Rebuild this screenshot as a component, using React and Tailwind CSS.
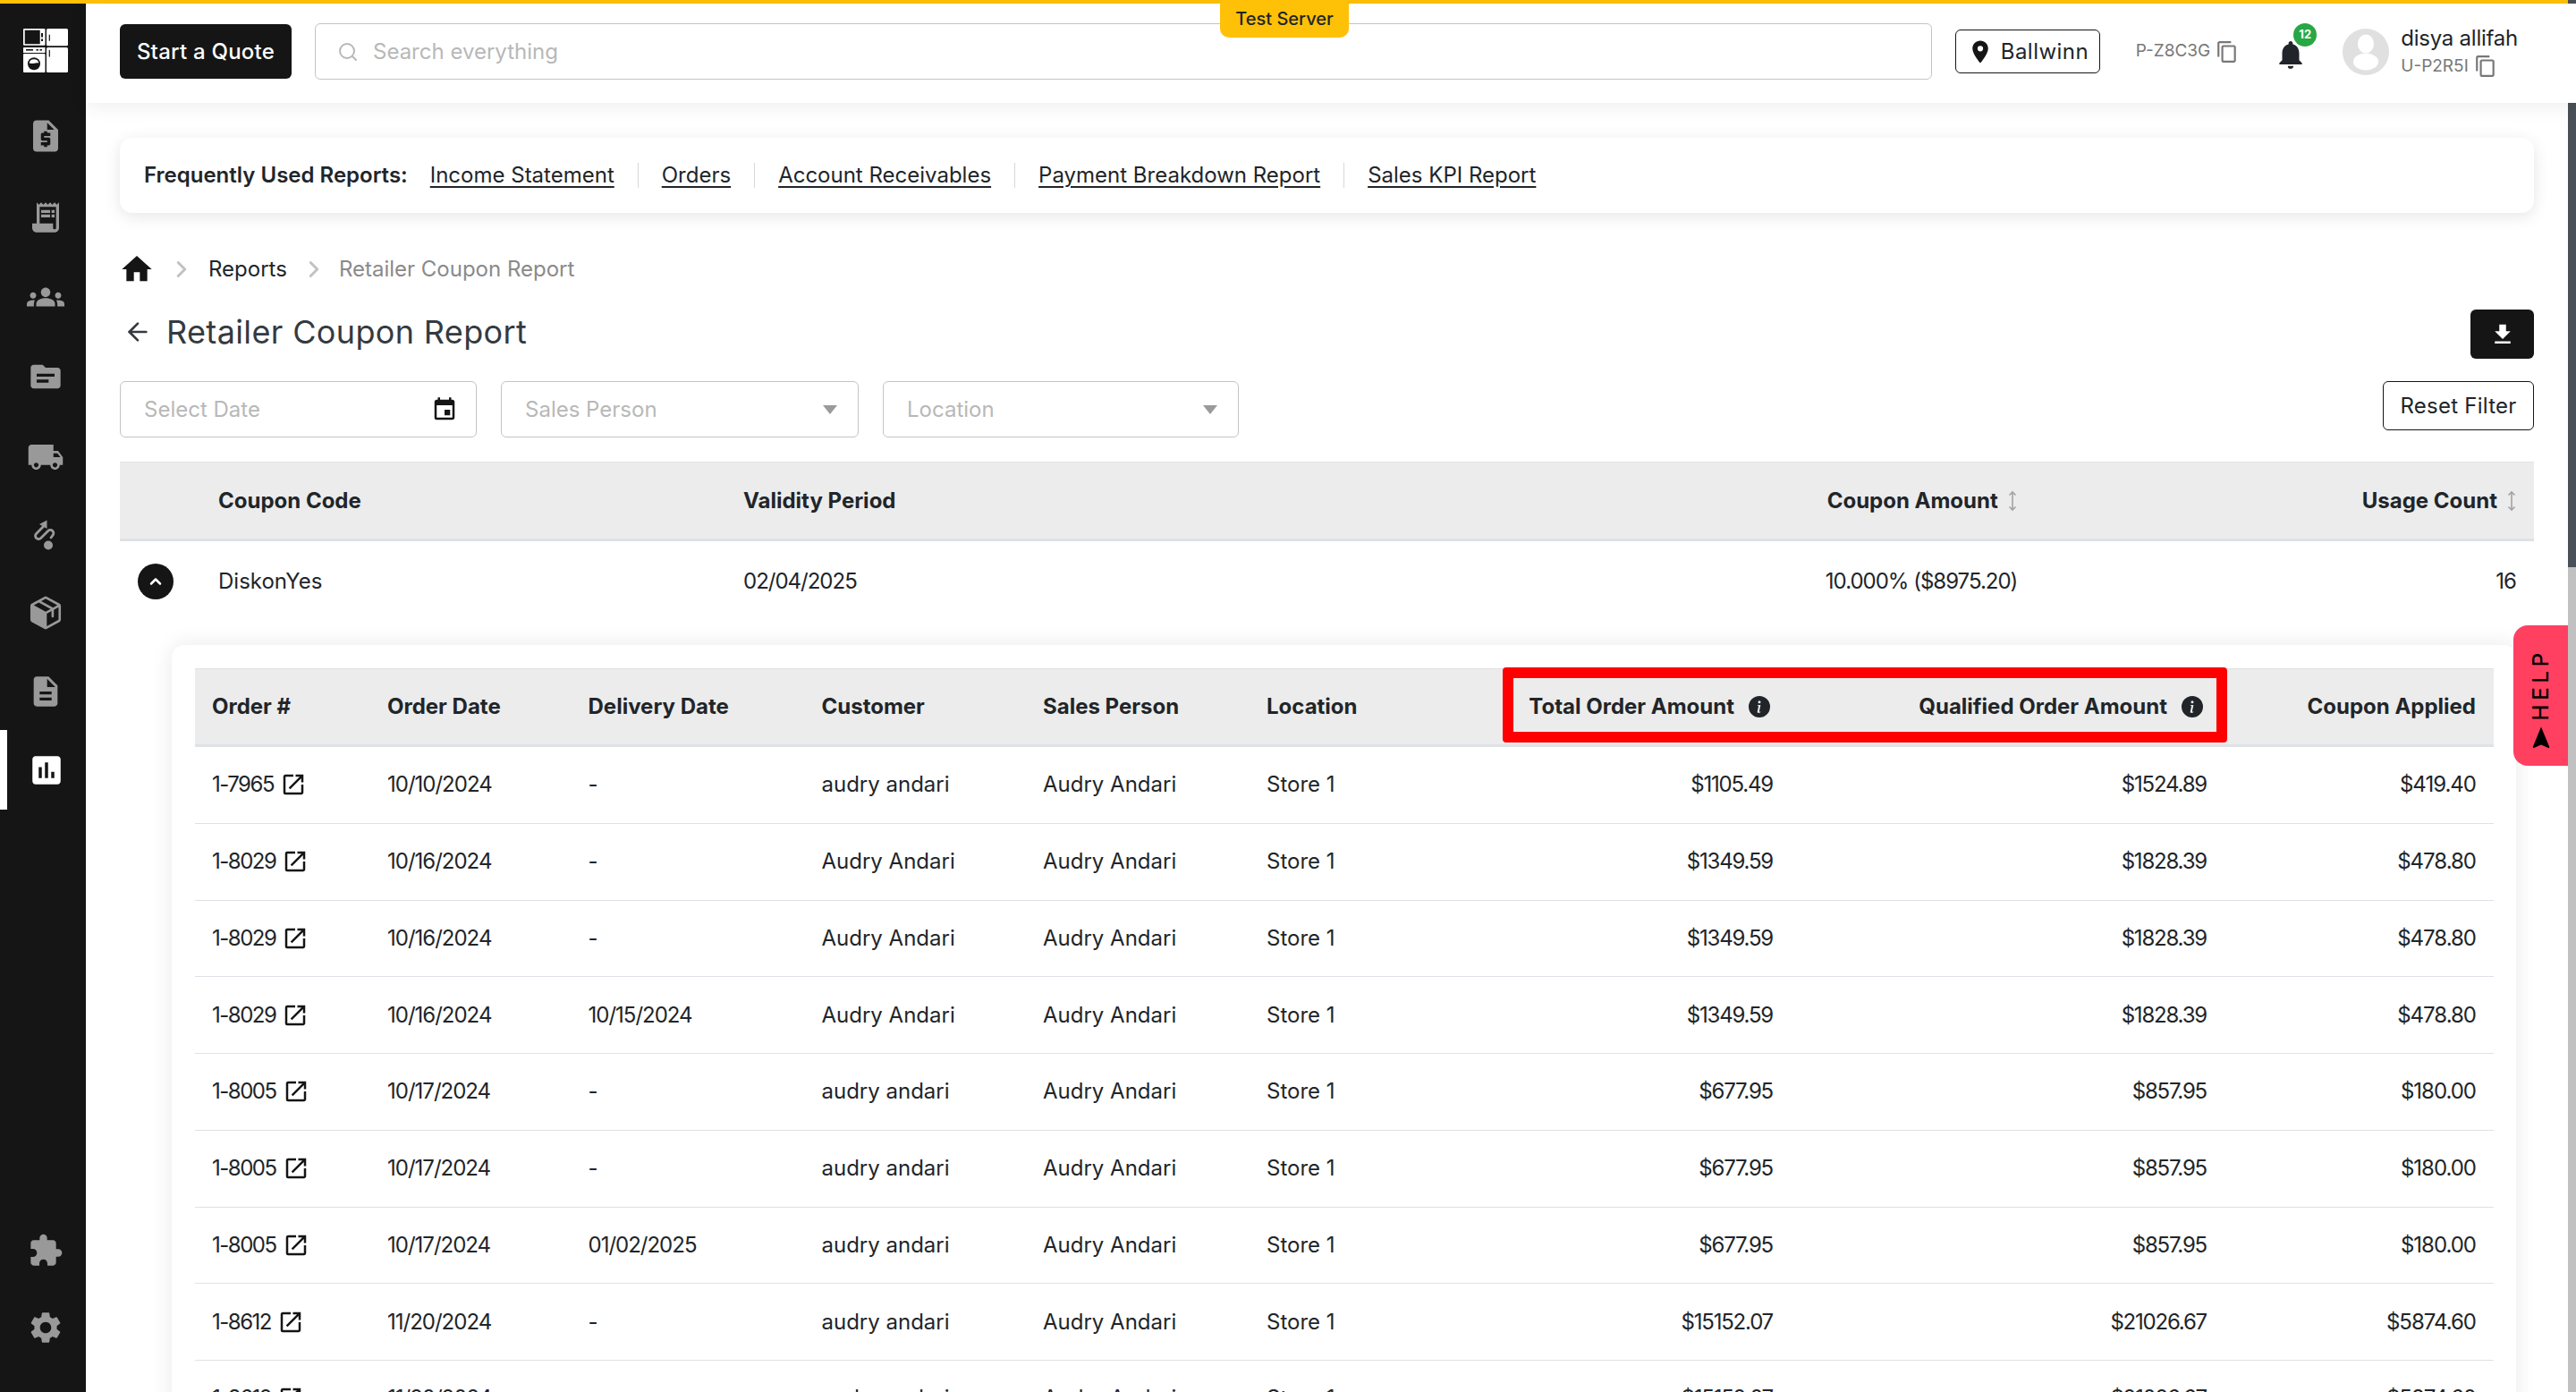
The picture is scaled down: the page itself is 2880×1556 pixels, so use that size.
import { LuChevronRight, LuChevronUp, LuSearch, LuArrowLeft } from 'react-icons/lu';
import {
  MdRequestQuote, MdReceiptLong, MdGroups, MdTopic, MdLocalShipping, MdDescription, MdAssessment,
  MdExtension, MdSettings, MdHome, MdContentCopy, MdLocationOn, MdNotifications, MdEvent, MdOpenInNew,
  MdFileDownload, MdNavigation,
} from 'react-icons/md';
import { PiPackageFill } from 'react-icons/pi';
import { BsInfoCircleFill } from 'react-icons/bs';

function RouteIcon() {
  return (
    <svg width="28" height="34" viewBox="0 0 28 34" fill="none">
      <polygon points="7,5 15.5,0.5 15.5,10" fill="currentColor" />
      <path d="M11.5 7.5 3.6 15.4a3.6 3.6 0 0 0 5.1 5.1l8-8a3.6 3.6 0 0 1 5.1 5.1L20 20" stroke="currentColor" strokeWidth="2.8" strokeLinecap="round" />
      <circle cx="17" cy="28.5" r="5" fill="currentColor" />
    </svg>
  );
}

const TOP_NAV = [
  { icon: MdRequestQuote, h: 'h-[91px]', size: 42 },
  { icon: MdReceiptLong, h: 'h-[91px]', size: 40 },
  { icon: MdGroups, h: 'h-[87px]', size: 42 },
  { icon: MdTopic, h: 'h-[91px]', size: 40 },
  { icon: MdLocalShipping, h: 'h-[89px]', size: 42 },
  { icon: RouteIcon, h: 'h-[86px]' },
  { icon: PiPackageFill, h: 'h-[88px]', size: 42 },
  { icon: MdDescription, h: 'h-[87px]', size: 40 },
];

const REPORT_LINKS = ['Income Statement', 'Orders', 'Account Receivables', 'Payment Breakdown Report', 'Sales KPI Report'];

const ORDERS = [
  ['1-7965', '10/10/2024', '-', 'audry andari', '$1105.49', '$1524.89', '$419.40'],
  ['1-8029', '10/16/2024', '-', 'Audry Andari', '$1349.59', '$1828.39', '$478.80'],
  ['1-8029', '10/16/2024', '-', 'Audry Andari', '$1349.59', '$1828.39', '$478.80'],
  ['1-8029', '10/16/2024', '10/15/2024', 'Audry Andari', '$1349.59', '$1828.39', '$478.80'],
  ['1-8005', '10/17/2024', '-', 'audry andari', '$677.95', '$857.95', '$180.00'],
  ['1-8005', '10/17/2024', '-', 'audry andari', '$677.95', '$857.95', '$180.00'],
  ['1-8005', '10/17/2024', '01/02/2025', 'audry andari', '$677.95', '$857.95', '$180.00'],
  ['1-8612', '11/20/2024', '-', 'audry andari', '$15152.07', '$21026.67', '$5874.60'],
  ['1-8612', '11/20/2024', '-', 'audry andari', '$15152.07', '$21026.67', '$5874.60'],
];

const ORDER_COLS = 'grid grid-cols-[196px_224.5px_261px_247.5px_250px_283px_321px_485px_302px]';

function SortArrows() {
  return (
    <svg width="12" height="24" viewBox="0 0 12 24" fill="none" stroke="#a3a3a3" strokeWidth="1.6" className="shrink-0">
      <path d="M6 2v20M2.5 5.5 6 2l3.5 3.5M2.5 18.5 6 22l3.5-3.5" />
    </svg>
  );
}

function Caret() {
  return (
    <svg width="18" height="10" viewBox="0 0 18 10" className="shrink-0">
      <polygon points="1,0 17,0 9,10" fill="#9a9a9a" />
    </svg>
  );
}

function Logo() {
  return (
    <svg width="50" height="49" viewBox="0 0 50 49" className="shrink-0">
      <rect x="0" y="0" width="24.5" height="18.7" rx="1" fill="#fff" />
      <rect x="1.7" y="1.7" width="17" height="15.5" fill="#151515" />
      <rect x="20" y="5" width="2" height="4.5" fill="#151515" />
      <rect x="20" y="11.5" width="2" height="2.5" fill="#151515" />
      <rect x="26" y="0" width="24" height="19.3" rx="1.5" fill="#fff" />
      <rect x="28.7" y="6.7" width="1.2" height="7" fill="#151515" />
      <rect x="0" y="21" width="24.5" height="6" rx="0.6" fill="#fff" />
      <rect x="3" y="23" width="8" height="1.6" fill="#151515" />
      <rect x="14.5" y="23" width="2.4" height="1.6" fill="#151515" />
      <rect x="18.5" y="23" width="2.4" height="1.6" fill="#151515" />
      <rect x="0" y="28" width="24.5" height="21" rx="1" fill="#fff" />
      <circle cx="12" cy="39.3" r="7" fill="#151515" />
      <path d="M6.6 38.6a5.5 5.5 0 0 1 10.8 0c-3.4-1.6-6.4 1.6-10.8 0Z" fill="#fff" />
      <rect x="26" y="21" width="24" height="28" rx="1.5" fill="#fff" />
      <rect x="28.7" y="24" width="1.2" height="7.5" fill="#151515" />
    </svg>
  );
}

function Sidebar() {
  return (
    <aside className="w-[96px] shrink-0 bg-[#151515] flex flex-col text-[#999999]">
      <div className="h-[102px] pt-[28px] pl-[6px] flex justify-center">
        <Logo />
      </div>
      {TOP_NAV.map(({ icon: Icon, h, size }, i) => (
        <div key={i} className={`${h} pl-[6px] flex items-center justify-center`}>
          <Icon size={size} />
        </div>
      ))}
      <div className="h-[89px] flex items-center justify-center border-l-[8px] border-white text-white">
        <MdAssessment size={42} />
      </div>
      <div className="flex-1" />
      <div className="h-[86px] pl-[6px] flex items-center justify-center">
        <MdExtension size={40} />
      </div>
      <div className="h-[115px] pb-[29px] pl-[6px] flex items-center justify-center">
        <MdSettings size={42} />
      </div>
    </aside>
  );
}

function Header() {
  return (
    <header className="relative h-[111px] shrink-0 bg-white shadow-[0_4px_20px_rgba(0,0,0,0.07)] pl-[38px] pr-[65px] pb-[4px] flex items-center z-10">
      <button className="w-[192px] h-[61px] bg-[#151515] text-white rounded-[6px] text-[24px] font-medium tracking-[0.01em]">Start a Quote</button>
      <div className="ml-[26px] flex-1 h-[63px] border border-[#c4c4c4] rounded-[6px] flex items-center pl-[24px] text-[#b8b8b8] text-[24px]">
        <LuSearch size={24} className="mr-[16px]" />
        Search everything
      </div>
      <div className="absolute left-[1268px] top-[-4px] w-[144px] h-[42px] bg-[#ffc107] rounded-b-[10px] flex items-center justify-center text-[20px] text-[#212529] font-medium">Test Server</div>
      <div className="ml-[26px] w-[162px] h-[49px] border border-[#151515] rounded-[6px] flex items-center pl-[14px] text-[24px] text-[#212529] tracking-[0.02em]">
        <MdLocationOn size={30} className="text-[#151515] mr-[8px] -ml-[2px]" />
        Ballwinn
      </div>
      <div className="ml-[40px] flex items-center text-[#777777] text-[19px]">
        P-Z8C3G
        <MdContentCopy size={26} className="ml-[6px]" />
      </div>
      <div className="relative ml-[38px] w-[40px] flex justify-center">
        <MdNotifications size={38} className="text-[#212529] mt-[6px]" />
        <span className="absolute right-[-9px] top-[-10px] w-[26px] h-[26px] rounded-full bg-[#28a745] text-white text-[13px] font-bold flex items-center justify-center">12</span>
      </div>
      <svg width="52" height="52" viewBox="0 0 52 52" className="ml-[38px] shrink-0">
        <circle cx="26" cy="26" r="26" fill="#e0e0e0" />
        <ellipse cx="26" cy="17" rx="9" ry="10.5" fill="#fff" />
        <ellipse cx="26" cy="37" rx="14" ry="9.5" fill="#fff" />
      </svg>
      <div className="ml-[13px] flex flex-col">
        <span className="text-[24px] leading-[32px] text-[#212529] tracking-[-0.01em]">disya allifah</span>
        <span className="flex items-center text-[19px] leading-[30px] text-[#777777]">
          U-P2R5I
          <MdContentCopy size={26} className="ml-[6px]" />
        </span>
      </div>
    </header>
  );
}

function ReportLinks() {
  return (
    <div className="mt-[39px] h-[84px] bg-white rounded-[14px] shadow-[0_4px_18px_rgba(0,0,0,0.1)] pl-[27px] flex items-center text-[24px] text-[#212529]">
      <span className="font-semibold mr-[25px]">Frequently Used Reports:</span>
      {REPORT_LINKS.map((label, i) => (
        <span key={label} className="flex items-center">
          {i > 0 && <span className="w-px h-[28px] bg-[#d8d8d8] mx-[26px]" />}
          <span className="underline underline-offset-[4px]">{label}</span>
        </span>
      ))}
    </div>
  );
}

function CouponHeader() {
  return (
    <div className="mt-[27px] h-[89px] bg-[#ececec] border-t border-[#e2e2e2] border-b-[3px] border-b-[#dee2e6] grid grid-cols-[110px_587px_1fr_auto] items-center text-[24px] font-bold text-[#212529]">
      <span className="col-start-2 flex w-[587px]">
        <span>Coupon Code</span>
      </span>
      <span>Validity Period</span>
      <span className="flex items-center justify-end gap-[20px]">
        <span className="flex items-center justify-end gap-[10px] w-[300px] mr-[365px]">Coupon Amount<SortArrows /></span>
        <span className="flex items-center gap-[10px] mr-[19px]">Usage Count<SortArrows /></span>
      </span>
    </div>
  );
}

function CouponRow() {
  return (
    <div className="h-[90px] grid grid-cols-[110px_587px_1fr_auto] items-center text-[24px] text-[#212529]">
      <span className="pl-[20px]">
        <span className="w-[40px] h-[40px] rounded-full bg-[#151515] flex items-center justify-center text-white">
          <LuChevronUp size={20} strokeWidth={3} />
        </span>
      </span>
      <span>DiskonYes</span>
      <span className="tracking-[-1px]">02/04/2025</span>
      <span className="flex items-center">
        <span className="mr-[535px] tracking-[-1px]">10.000% ($8975.20)</span>
        <span className="mr-[20px] tracking-[-1px]">16</span>
      </span>
    </div>
  );
}

function OrderTable() {
  return (
    <div className="relative">
      <div className={`${ORDER_COLS} h-[88px] bg-[#ececec] border-t border-[#e2e2e2] border-b-[3px] border-b-[#dee2e6] items-center text-[24px] font-bold text-[#212529]`}>
        <span className="pl-[19px]">Order #</span>
        <span className="pl-[19px]">Order Date</span>
        <span className="pl-[19px]">Delivery Date</span>
        <span className="pl-[19px]">Customer</span>
        <span className="pl-[19px]">Sales Person</span>
        <span className="pl-[19px]">Location</span>
        <span className="flex items-center justify-end gap-[16px] pr-[22px] whitespace-nowrap">Total Order Amount<BsInfoCircleFill size={24} /></span>
        <span className="flex items-center justify-end gap-[16px] pr-[23px] whitespace-nowrap">Qualified Order Amount<BsInfoCircleFill size={24} /></span>
        <span className="text-right pr-[20px]">Coupon Applied</span>
      </div>
      {ORDERS.map((o, i) => (
        <div key={i} className={`${ORDER_COLS} h-[85.75px] border-b border-[#dee2e6] items-center text-[24px] text-[#212529]`}>
          <span className="pl-[19px] flex items-center gap-[7px]">
            <span className="tracking-[-1.5px]">{o[0]}</span>
            <MdOpenInNew size={30} className="text-[#151515]" />
          </span>
          <span className="pl-[19px] tracking-[-1px]">{o[1]}</span>
          <span className="pl-[19px] tracking-[-1px]">{o[2]}</span>
          <span className="pl-[19px]">{o[3]}</span>
          <span className="pl-[19px]">Audry Andari</span>
          <span className="pl-[19px]">Store 1</span>
          <span className="text-right pr-[19px] tracking-[-1.2px]">{o[4]}</span>
          <span className="text-right pr-[19px] tracking-[-1.2px]">{o[5]}</span>
          <span className="text-right pr-[20px] tracking-[-1px]">{o[6]}</span>
        </div>
      ))}
      {/* highlight drawn over the two amount headers */}
      <div className="absolute left-[1462px] top-[-1px] w-[810px] h-[84px] border-[12px] border-[#ff0000] rounded-[4px]" />
    </div>
  );
}

export default function App() {
  return (
    <div className="relative h-[1556px] w-full overflow-hidden bg-white flex flex-col font-['Inter',sans-serif]">
      <div className="h-[4px] w-full shrink-0 bg-[#ffc107]" />
      <div className="flex flex-1 min-h-0">
        <Sidebar />
        <div className="flex-1 min-w-0 flex flex-col">
          <Header />
          <main className="flex-1 min-h-0 pl-[38px] pr-[47px]">
            <ReportLinks />

            {/* Breadcrumb */}
            <div className="mt-[45px] h-[36px] flex items-center text-[24px]">
              <MdHome size={40} className="text-[#151515] ml-[-1px]" />
              <LuChevronRight size={30} strokeWidth={2.4} className="text-[#c2c2c2] ml-[15px]" />
              <span className="ml-[15px] text-[#212529]">Reports</span>
              <LuChevronRight size={30} strokeWidth={2.4} className="text-[#c2c2c2] ml-[15px]" />
              <span className="ml-[13px] text-[#8a8a8a]">Retailer Coupon Report</span>
            </div>

            {/* Title */}
            <div className="mt-[27px] h-[55px] flex items-center justify-between">
              <div className="flex items-center text-[#343a40] text-[36px] tracking-[0.01em] -mt-[6px]">
                <LuArrowLeft size={32} className="ml-[4px] mr-[16px]" />
                Retailer Coupon Report
              </div>
              <button className="w-[71px] h-[55px] rounded-[6px] bg-[#151515] text-white flex items-center justify-center">
                <MdFileDownload size={30} />
              </button>
            </div>

            {/* Filters */}
            <div className="mt-[25px] flex items-start text-[24px] text-[#b8b8b8]">
              <div className="w-[399px] h-[63px] border border-[#c4c4c4] rounded-[6px] flex items-center justify-between pl-[26px] pr-[20px]">
                Select Date
                <MdEvent size={30} className="text-[#151515]" />
              </div>
              <div className="ml-[27px] w-[400px] h-[63px] border border-[#c4c4c4] rounded-[6px] flex items-center justify-between pl-[26px] pr-[22px]">
                Sales Person
                <Caret />
              </div>
              <div className="ml-[27px] w-[398px] h-[63px] border border-[#c4c4c4] rounded-[6px] flex items-center justify-between pl-[26px] pr-[22px]">
                Location
                <Caret />
              </div>
              <button className="ml-auto w-[169px] h-[55px] border border-[#151515] rounded-[6px] text-[#212529] tracking-[0.01em]">Reset Filter</button>
            </div>

            <CouponHeader />
            <CouponRow />

            {/* Expanded coupon orders */}
            <div className="ml-[58px] mr-[20px] mt-[26px] pt-[26px] pl-[26px] pr-[25px] bg-white rounded-t-[14px] shadow-[0_0_24px_rgba(0,0,0,0.09)]">
              <OrderTable />
            </div>
          </main>
        </div>
      </div>

      {/* Scrollbar */}
      <div className="absolute right-0 top-0 bottom-0 w-[9px] bg-[#c1c1c1]">
        <div className="h-[634px] bg-[#495057]" />
      </div>

      {/* Help tab */}
      <div className="absolute left-[2810px] top-[699px] w-[61px] h-[157px] bg-[#ff4060] rounded-l-[16px] flex flex-col items-center justify-end pb-[16px] text-black">
        <span className="[writing-mode:vertical-rl] rotate-180 text-[24px] font-medium tracking-[0.2em]">HELP</span>
        <MdNavigation size={30} className="mt-[4px]" />
      </div>
    </div>
  );
}
